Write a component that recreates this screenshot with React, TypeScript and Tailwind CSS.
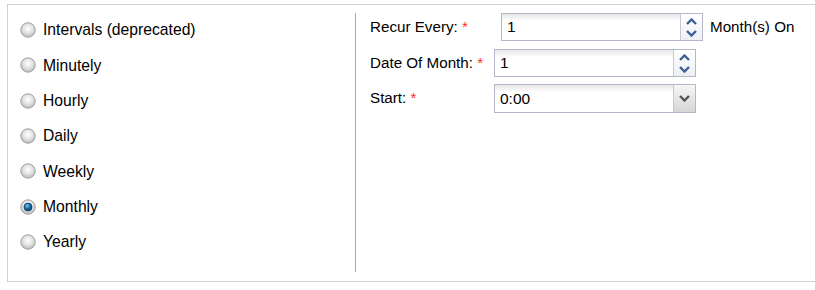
import React from "react";

function Radio({ checked }: { checked?: boolean }) {
  return (
    <svg width="16" height="16" viewBox="0 0 16 16" className="shrink-0">
      <defs>
        <radialGradient id={checked ? "rgc" : "rg"} cx="50%" cy="40%" r="60%">
          <stop offset="0%" stopColor="#ffffff" />
          <stop offset="55%" stopColor="#e2e2e2" />
          <stop offset="100%" stopColor="#b8b8b8" />
        </radialGradient>
        <radialGradient id="dot" cx="40%" cy="35%" r="70%">
          <stop offset="0%" stopColor="#7cc8f0" />
          <stop offset="50%" stopColor="#1a6ca6" />
          <stop offset="100%" stopColor="#0b3a60" />
        </radialGradient>
      </defs>
      <circle cx="8" cy="8" r="7.2" fill={`url(#${checked ? "rgc" : "rg"})`} stroke="#a0a0a0" strokeWidth="1" />
      {checked && <circle cx="8" cy="8" r="4" fill="url(#dot)" stroke="#0d3e62" strokeWidth="0.7" />}
    </svg>
  );
}

function Chevron({ dir, color }: { dir: "up" | "down"; color: string }) {
  return (
    <svg width="11" height="7" viewBox="0 0 11 7">
      {dir === "up" ? (
        <path d="M1 6 L5.5 1.5 L10 6" fill="none" stroke={color} strokeWidth="2.4" strokeLinejoin="miter" />
      ) : (
        <path d="M1 1 L5.5 5.5 L10 1" fill="none" stroke={color} strokeWidth="2.4" strokeLinejoin="miter" />
      )}
    </svg>
  );
}

function SpinField({ value, h }: { value: string; h: string }) {
  return (
    <div className={`flex w-[202px] ${h} border border-[#b5b8c8] bg-white`}>
      <div className="flex-1 flex items-center pl-[5px] bg-[linear-gradient(#e6e6e6,#ffffff_7px)] text-[15.5px] text-black">
        {value}
      </div>
      <div className="w-[22px] flex flex-col border-l border-[#c6c8d2] bg-[linear-gradient(#ffffff,#eef0f4)]">
        <div className="flex-1 flex items-center justify-center pt-[1px]">
          <Chevron dir="up" color="#3d5f94" />
        </div>
        <div className="flex-1 flex items-center justify-center pb-[1px]">
          <Chevron dir="down" color="#3d5f94" />
        </div>
      </div>
    </div>
  );
}

function SelectField({ value }: { value: string }) {
  return (
    <div className="flex w-[202px] h-[29px] border border-[#b5b8c8] bg-white">
      <div className="flex-1 flex items-center pl-[5px] bg-[linear-gradient(#e6e6e6,#ffffff_7px)] text-[15.5px] text-black">
        {value}
      </div>
      <div className="w-[22px] flex items-center justify-center border-l border-[#c6c8d2] bg-[linear-gradient(#f6f6f6,#d6d6d6)]">
        <Chevron dir="down" color="#555555" />
      </div>
    </div>
  );
}

export default function App() {
  const items = ["Intervals (deprecated)", "Minutely", "Hourly", "Daily", "Weekly", "Monthly", "Yearly"];
  return (
    <div
      className="w-[815px] h-[290px] bg-white overflow-hidden pt-[4px] pl-[7px]"
      style={{ fontFamily: '"Liberation Sans", Arial, sans-serif' }}
    >
      <div className="w-[830px] h-[278px] border-l border-t border-b border-[#d0d0d0] flex">
        <div className="w-[347px] pt-[7.5px] pl-[12px] flex flex-col">
          {items.map((t) => (
            <div key={t} className="h-[35.33px] flex items-center gap-[7px] text-[15.7px] text-black">
              <Radio checked={t === "Monthly"} />
              <span>{t}</span>
            </div>
          ))}
        </div>
        <div className="mt-[8px] mb-[9px] w-px bg-[#a8a8a8]" />
        <div className="pl-[14px] pt-[8px] flex flex-col text-[15.2px] text-black">
          <div className="flex items-center h-[28px]">
            <div className="w-[131px]">
              Recur Every: <span className="text-[#ff2a2a]">*</span>
            </div>
            <SpinField value="1" h="h-[28px]" />
            <span className="ml-[7px]">Month(s) On</span>
          </div>
          <div className="flex items-center h-[28px] mt-[8px]">
            <div className="w-[124px]">
              Date Of Month: <span className="text-[#ff2a2a]">*</span>
            </div>
            <SpinField value="1" h="h-[28px]" />
          </div>
          <div className="flex items-center h-[29px] mt-[7px]">
            <div className="w-[124px]">
              Start: <span className="text-[#ff2a2a]">*</span>
            </div>
            <SelectField value="0:00" />
          </div>
        </div>
      </div>
    </div>
  );
}
